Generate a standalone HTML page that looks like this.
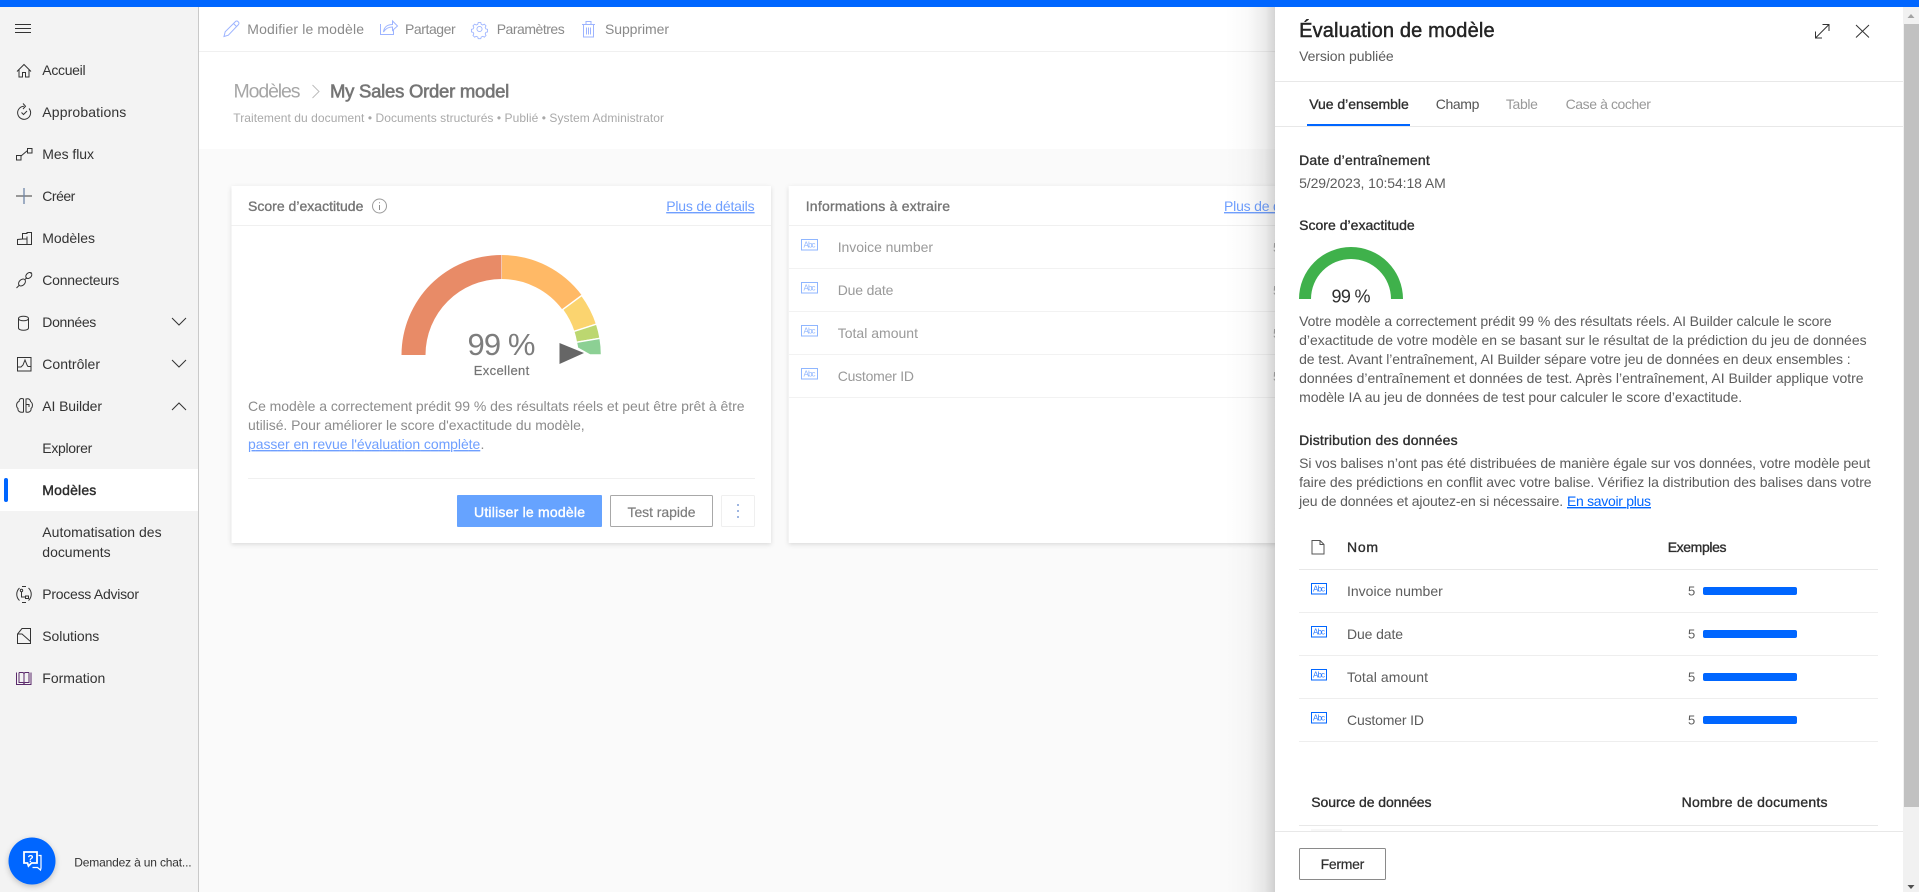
<!DOCTYPE html>
<html lang="fr">
<head>
<meta charset="utf-8">
<title>Évaluation de modèle</title>
<style>
html,body{margin:0;padding:0;width:1919px;height:892px;overflow:hidden;background:#fff}
svg{display:block;position:absolute;left:0;top:0}
text{font-family:"Liberation Sans",Arial,sans-serif;font-size:14px;white-space:pre}
.nav{fill:#333}
.navb{fill:#2b2b2b;stroke:#2b2b2b;stroke-width:.4}
.ic{fill:none;stroke:#333;stroke-width:1}
.tb{fill:#8a8a8a}
.tic{fill:none;stroke:#9db4ff;stroke-width:1}
.c{fill:#8c8c8c}
.cs{fill:#757575;stroke:#757575;stroke-width:.35}
.r{fill:#9a9a9a}
.lk{fill:#6f9fff;text-decoration:underline}
.h{fill:#2e2e2e;stroke:#2e2e2e;stroke-width:.35}
.p{fill:#5c5c5c}
.abc{fill:#fff;stroke:#0066ff;stroke-width:1}
.abct{font-size:8px;fill:#2a7bff}
.abf{fill:#fff;stroke:#8fb6ff;stroke-width:1}
.abft{font-size:8px;fill:#8fb6ff}
.d{stroke:#eeeeee;stroke-width:1}
</style>
</head>
<body>
<svg width="1919" height="892" viewBox="0 0 1919 892" xmlns="http://www.w3.org/2000/svg">
<defs>
<filter id="cs" x="-5%" y="-5%" width="110%" height="112%"><feDropShadow dx="0" dy="1.5" stdDeviation="2.5" flood-color="#000" flood-opacity=".13"/></filter>
<filter id="chs" x="-30%" y="-30%" width="160%" height="160%"><feDropShadow dx="0" dy="2" stdDeviation="3" flood-color="#000" flood-opacity=".22"/></filter>
<linearGradient id="ps" x1="0" x2="1" y1="0" y2="0">
<stop offset="0" stop-color="#000" stop-opacity="0"/>
<stop offset=".45" stop-color="#000" stop-opacity=".02"/>
<stop offset=".8" stop-color="#000" stop-opacity=".08"/>
<stop offset="1" stop-color="#000" stop-opacity=".17"/>
</linearGradient>
</defs>

<!-- main background -->
<rect x="199" y="7" width="1080" height="885" fill="#fff"/>
<rect x="199" y="149" width="1080" height="743" fill="#fafafa"/>
<line x1="199" x2="1279" y1="51.5" y2="51.5" stroke="#f0f0f0"/>

<!-- toolbar -->
<g class="tic">
<path d="M224 36.5l1.2-4.7L235.4 21.6a1.8 1.8 0 0 1 2.6 0l.4.4a1.8 1.8 0 0 1 0 2.6L228.3 35.2z M233.5 23.5l3 3"/>
<path d="M381 26v10.5h13V32 M384 34c.5-5 4-7.5 9-7.5V23l5 5-5 4.500v-3.500c-4 0-7 1.500-9 5z" transform="translate(-.5 -2)"/>
<g transform="translate(479.5 29) scale(.86) translate(-479.5 -29)">
<circle cx="479.500" cy="29" r="3"/>
<path d="M478 21.500h3l.5 2 1.800.8 1.800-1 2 2-1 1.800.8 1.800 2 .5v3l-2 .5-.8 1.800 1 1.800-2 2-1.800-1-1.800.8-.5 2h-3l-.5-2-1.800-.8-1.800 1-2-2 1-1.800-.8-1.800-2-.5v-3l2-.5.8-1.800-1-1.800 2-2 1.800 1 1.800-.8z"/>
</g>
<path d="M582 24.500h13 M586 24.500v-3h5v3 M583.500 24.500v12.500h10v-12.500 M586.500 27.500v7 M588.500 27.500v7 M590.500 27.500v7"/>
</g>
<text class="tb" x="247.300" y="34" textLength="116.700">Modifier le modèle</text>
<text class="tb" x="405" y="34" textLength="50.700">Partager</text>
<text class="tb" x="496.700" y="34" textLength="68">Paramètres</text>
<text class="tb" x="605" y="34" textLength="64">Supprimer</text>

<!-- breadcrumb -->
<text x="233.500" y="97.500" textLength="67" style="font-size:19.500px" fill="#a6a6a6">Modèles</text>
<path d="M312.500 85l6.500 6.500-6.500 6.500" fill="none" stroke="#bdbdbd"/>
<text x="330" y="97.500" textLength="179.300" style="font-size:18.500px;stroke:#757575;stroke-width:.6" fill="#757575">My Sales Order model</text>
<text x="233.300" y="122" textLength="430.700" style="font-size:12px" fill="#a9a9a9">Traitement du document • Documents structurés • Publié • System Administrator</text>

<!-- card 1 -->
<rect x="231.500" y="186" width="539.500" height="357" fill="#fff" filter="url(#cs)"/>
<line x1="231.500" x2="771" y1="225.500" y2="225.500" stroke="#f0f0f0"/>
<text class="cs" x="248" y="211" textLength="115.400">Score d’exactitude</text>
<circle cx="379.500" cy="206" r="7" fill="none" stroke="#9a9a9a"/>
<path d="M379.500 205v5M379.500 202.200v1" stroke="#8c8c8c" fill="none"/>
<text class="lk" x="666.200" y="211" textLength="88.400">Plus de détails</text>

<g stroke="#fff" stroke-width="1.400">
<path fill="#e88b67" d="M401.500 355A100 100 0 0 1 501.500 255V279A76 76 0 0 0 425.500 355Z" stroke="none"/>
<path fill="#ffb966" d="M502 255A100 100 0 0 1 581.800 295.400L562.500 309.700A76 76 0 0 0 502 279Z" stroke="none"/>
<path fill="#fbd46f" d="M581.800 295.400A100 100 0 0 1 596.600 324.100L573.800 331.500A76 76 0 0 0 562.500 309.700Z"/>
<path fill="#bcd770" d="M596.600 324.100A100 100 0 0 1 600.100 338.300L576.400 342.300A76 76 0 0 0 573.800 331.500Z"/>
<path fill="#8cd094" d="M600.100 338.300A100 100 0 0 1 601.500 355H590L577.500 348A76 76 0 0 0 576.400 342.300Z"/>
</g>
<path d="M559.500 343V364L584 353Z" fill="#666"/>
<text x="501.500" y="355" text-anchor="middle" textLength="68" style="font-size:31px" fill="#7d7d7d">99 %</text>
<text class="cs" x="501.500" y="375" text-anchor="middle" textLength="55.500" style="font-size:13px;stroke-width:.2">Excellent</text>

<text class="c" x="248" y="411" textLength="496.500">Ce modèle a correctement prédit 99 % des résultats réels et peut être prêt à être</text>
<text class="c" x="248" y="430" textLength="336.700">utilisé. Pour améliorer le score d'exactitude du modèle,</text>
<text class="lk" x="248" y="449" textLength="232.300">passer en revue l'évaluation complète</text>
<text class="c" x="480.500" y="449">.</text>
<line x1="248" x2="755" y1="478.500" y2="478.500" stroke="#f0f0f0"/>

<rect x="457" y="495" width="145" height="32" rx="1" fill="#66a3ff"/>
<text x="529.500" y="517" text-anchor="middle" textLength="111" fill="#fff" style="stroke:#fff;stroke-width:.4">Utiliser le modèle</text>
<rect x="610.500" y="495.500" width="102" height="31" rx="1" fill="#fff" stroke="#a8a8a8"/>
<text x="661.500" y="517" text-anchor="middle" textLength="68" fill="#7d7d7d" style="stroke:#7d7d7d;stroke-width:.2">Test rapide</text>
<rect x="721.500" y="495.500" width="33" height="31" rx="1" fill="#fff" stroke="#efefef"/>
<circle cx="738" cy="505" r="1" fill="#7f9fd8"/><circle cx="738" cy="511" r="1" fill="#7f9fd8"/><circle cx="738" cy="517" r="1" fill="#7f9fd8"/>

<!-- card 2 -->
<rect x="788.700" y="186" width="520" height="357" fill="#fff" filter="url(#cs)"/>
<line x1="789" x2="1279" y1="225.500" y2="225.500" stroke="#f0f0f0"/>
<text class="cs" x="805.700" y="211" textLength="144.300">Informations à extraire</text>
<text class="lk" x="1224" y="211" textLength="88.400">Plus de détails</text>
<g stroke="#f2f2f2"><line x1="789" x2="1279" y1="268.500" y2="268.500"/><line x1="789" x2="1279" y1="311.500" y2="311.500"/><line x1="789" x2="1279" y1="354.500" y2="354.500"/><line x1="789" x2="1279" y1="397.500" y2="397.500"/></g>
<rect class="abf" x="801.500" y="239.500" width="16" height="10.500"/><text class="abft" x="803.500" y="247.500" textLength="12">Abc</text>
<rect class="abf" x="801.500" y="282.500" width="16" height="10.500"/><text class="abft" x="803.500" y="290.500" textLength="12">Abc</text>
<rect class="abf" x="801.500" y="325.500" width="16" height="10.500"/><text class="abft" x="803.500" y="333.500" textLength="12">Abc</text>
<rect class="abf" x="801.500" y="368.500" width="16" height="10.500"/><text class="abft" x="803.500" y="376.500" textLength="12">Abc</text>
<text class="r" x="837.700" y="252" textLength="95.300">Invoice number</text>
<text class="r" x="837.700" y="295" textLength="55.700">Due date</text>
<text class="r" x="837.700" y="338" textLength="80.300">Total amount</text>
<text class="r" x="837.700" y="381" textLength="76.300">Customer ID</text>
<text x="1273" y="252" style="font-size:13px" fill="#b0b0b0">5</text>
<text x="1273" y="295" style="font-size:13px" fill="#b0b0b0">5</text>
<text x="1273" y="338" style="font-size:13px" fill="#b0b0b0">5</text>
<text x="1273" y="381" style="font-size:13px" fill="#b0b0b0">5</text>

<!-- sidebar -->
<rect x="0" y="7" width="198" height="885" fill="#f3f3f3"/>
<rect x="198" y="7" width="1" height="885" fill="#c9c9c9"/>
<rect x="0" y="469" width="198" height="42" fill="#fff"/>
<rect x="4" y="478" width="4" height="24" rx="2" fill="#0066ff"/>
<path d="M15 24.500h16M15 28.500h16M15 32.500h16" stroke="#333" fill="none"/>

<g class="ic">
<path d="M17 71.500L24 64.500L31 71.500M19 69.500V77H22.500V72.500H25.500V77H29V69.500"/>
<path d="M29 108.500a6.500 6.500 0 1 1-5-2.200M23 103.500l2.500 2.700L23 109 M21.500 112.500l2 2 3.500-3.500"/>
<path d="M16.500 155.500h4.500v4.500h-4.500zM27.500 148.500h4.500v4.500h-4.500zM21 156L27.500 150.500"/>
<path d="M16 196h16" stroke="#666" stroke-width="1.300"/><path d="M24 188v16" stroke="#6f86a8" stroke-width="1.300"/>
<path d="M17.500 244.500v-5l5-.5v-5.500h4.500v-1h4.500v12h-14zM22.500 239h4.500v-2.500M27 239v5.500"/>
<path d="M16.500 288l3-3M25 279.500l2-2M31.500 272.500l-1 1"/>
<ellipse cx="22" cy="282.500" rx="4" ry="2.800" transform="rotate(-45 22 282.500)"/>
<ellipse cx="28.800" cy="275.500" rx="3.500" ry="2.500" transform="rotate(-45 28.800 275.500)"/>
<path d="M18.500 318.500c0-3 10-3 10 0v9.500c0 3-10 3-10 0zM18.500 318.500c0 3 10 3 10 0"/>
<rect x="17.500" y="357.500" width="13.500" height="13.500"/>
<path d="M18 367h3l2-2 2-5 2 5 1 1.500h3"/>
<path d="M23.500 399c-3-1.500-4.500 .5-4.500 2.500-3 1-3 5.500-1 7-.5 2.500 2 4.500 5.500 3.500zM23.500 399v13M26 399c3-1 4.500 1 4.500 2.500 2.500 1.500 2.500 5.500 .5 7 .5 2.500-2 4.500-5 3.500zM26 404.500h3v2.500"/>
<path d="M19.500 588a8.500 8.500 0 0 0 0 12.500M28.500 588a8.500 8.500 0 0 1 0 12.500M22 586.500h4M22 602.500h4"/>
<circle cx="21.500" cy="590.500" r="1.200"/><rect x="25.500" y="596" width="3" height="2.500"/><path d="M21.500 592v5h4"/>
<path d="M17.500 634V643.500H30.500V628.500H22L17.500 634ZM17.500 634h4.500l8.500 7.500"/>
<g stroke="#5b2a6b">
<path d="M16.500 672.500V684.500H31V672.500M19 672.500H22.500C23.500 672.500 24 673.500 24 674.500V684.500M29 672.500H25.500C24.500 672.500 24 673.500 24 674.500M19 672.500V682.500H22.500C23.500 682.500 24 683 24 684M29 672.500V682.500H25.500C24.500 682.500 24 683 24 684"/>
</g>
</g>

<text class="nav" x="42.300" y="75" textLength="43.300">Accueil</text>
<text class="nav" x="42.300" y="117" textLength="84">Approbations</text>
<text class="nav" x="42.300" y="159" textLength="51.700">Mes flux</text>
<text class="nav" x="42.300" y="201" textLength="33">Créer</text>
<text class="nav" x="42.300" y="243" textLength="52.700">Modèles</text>
<text class="nav" x="42.300" y="285" textLength="77">Connecteurs</text>
<text class="nav" x="42.300" y="327" textLength="54">Données</text>
<text class="nav" x="42.300" y="369" textLength="57.700">Contrôler</text>
<text class="nav" x="42.300" y="411" textLength="59.700">AI Builder</text>
<text class="nav" x="42.300" y="453" textLength="50">Explorer</text>
<text class="navb" x="42.300" y="495" textLength="54">Modèles</text>
<text class="nav" x="42.300" y="537" textLength="119.300">Automatisation des</text>
<text class="nav" x="42.300" y="557" textLength="68.300">documents</text>
<text class="nav" x="42.300" y="599" textLength="96.700">Process Advisor</text>
<text class="nav" x="42.300" y="641" textLength="57">Solutions</text>
<text class="nav" x="42.300" y="683" textLength="63">Formation</text>

<g fill="none" stroke="#333"><path d="M172 318l7 7 7-7M172 360l7 7 7-7M172 410l7-7 7 7"/></g>

<circle cx="32" cy="861" r="23.500" fill="#0066ff" filter="url(#chs)"/>
<path d="M24 852h13v11h-5.500l-3 3-1-3H24z" fill="none" stroke="#fff" stroke-width="1.800"/>
<path d="M38.500 855.500h2.500v12.500l-.5 2-3-2.500h-5" fill="none" stroke="#fff" stroke-width="1.200"/>
<text x="30.500" y="862" text-anchor="middle" style="font-size:10px;font-weight:bold" fill="#fff">?</text>
<text x="74.300" y="866.500" textLength="117.300" style="font-size:12px" fill="#333">Demandez à un chat...</text>

<!-- panel shadow + panel -->
<rect x="1225" y="7" width="50" height="885" fill="url(#ps)"/>
<rect x="1275" y="7" width="644" height="885" fill="#fff"/>

<text x="1299.100" y="37" textLength="195.500" style="font-size:20px;stroke:#242424;stroke-width:.45" fill="#242424">Évaluation de modèle</text>
<text class="p" x="1299.100" y="61" textLength="94.600">Version publiée</text>
<path d="M1815.500 38L1829 24.500M1822.500 24.500H1829V31M1815.500 31.500V38H1822" fill="none" stroke="#333"/>
<path d="M1856 25L1869 37.500M1869 25L1856 37.500" fill="none" stroke="#333"/>
<line x1="1275" x2="1903" y1="81.500" y2="81.500" stroke="#e8e8e8"/>

<text class="h" x="1309.200" y="109" textLength="99.600">Vue d’ensemble</text>
<text x="1435.700" y="109" textLength="43.700" fill="#555">Champ</text>
<text x="1505.900" y="109" textLength="32" fill="#999">Table</text>
<text x="1565.600" y="109" textLength="85.300" fill="#999">Case à cocher</text>
<rect x="1307" y="124" width="103" height="2" fill="#0066ff"/>
<line x1="1275" x2="1903" y1="126.500" y2="126.500" stroke="#e8e8e8"/>

<text class="h" x="1299.100" y="165" textLength="130.700">Date d’entraînement</text>
<text class="p" x="1299.100" y="188" textLength="146.700">5/29/2023, 10:54:18 AM</text>
<text class="h" x="1299.100" y="230" textLength="115.600">Score d’exactitude</text>

<path d="M1299 299A52 52 0 0 1 1403 299H1391A40 40 0 0 0 1311 299Z" fill="#3fb14b"/>
<text x="1351" y="302.700" text-anchor="middle" textLength="39" style="font-size:18px" fill="#2e2e2e">99 %</text>

<text class="p" x="1299.100" y="326" textLength="532.600">Votre modèle a correctement prédit 99 % des résultats réels. AI Builder calcule le score</text>
<text class="p" x="1299.100" y="345" textLength="567.500">d’exactitude de votre modèle en se basant sur le résultat de la prédiction du jeu de données</text>
<text class="p" x="1299.100" y="364" textLength="551.500">de test. Avant l’entraînement, AI Builder sépare votre jeu de données en deux ensembles :</text>
<text class="p" x="1299.100" y="383" textLength="564.500">données d’entraînement et données de test. Après l’entraînement, AI Builder applique votre</text>
<text class="p" x="1299.100" y="402" textLength="443">modèle IA au jeu de données de test pour calculer le score d’exactitude.</text>

<text class="h" x="1299.100" y="445" textLength="158.500">Distribution des données</text>
<text class="p" x="1299.100" y="468" textLength="571.200">Si vos balises n’ont pas été distribuées de manière égale sur vos données, votre modèle peut</text>
<text class="p" x="1299.100" y="487" textLength="572.500">faire des prédictions en conflit avec votre balise. Vérifiez la distribution des balises dans votre</text>
<text class="p" x="1299.100" y="506" textLength="264">jeu de données et ajoutez-en si nécessaire.</text>
<text x="1567" y="506" textLength="84" fill="#0066ff" style="text-decoration:underline">En savoir plus</text>

<path d="M1312 540.500h8l4 4v9.500h-12zM1320 540.500v4h4" fill="none" stroke="#555"/>
<text class="h" x="1347" y="552" textLength="31">Nom</text>
<text class="h" x="1667.700" y="552" textLength="58.800">Exemples</text>
<line x1="1299" x2="1878" y1="569.500" y2="569.500" stroke="#e8e8e8"/>
<line x1="1299" x2="1878" y1="612.500" y2="612.500" stroke="#eee"/>
<line x1="1299" x2="1878" y1="655.500" y2="655.500" stroke="#eee"/>
<line x1="1299" x2="1878" y1="698.500" y2="698.500" stroke="#eee"/>
<line x1="1299" x2="1878" y1="741.500" y2="741.500" stroke="#eee"/>

<rect class="abc" x="1311.500" y="583.500" width="15" height="10.500"/><text class="abct" x="1313" y="591.500" textLength="12">Abc</text>
<rect class="abc" x="1311.500" y="626.500" width="15" height="10.500"/><text class="abct" x="1313" y="634.500" textLength="12">Abc</text>
<rect class="abc" x="1311.500" y="669.500" width="15" height="10.500"/><text class="abct" x="1313" y="677.500" textLength="12">Abc</text>
<rect class="abc" x="1311.500" y="712.500" width="15" height="10.500"/><text class="abct" x="1313" y="720.500" textLength="12">Abc</text>

<text class="p" x="1347" y="596" textLength="95.800">Invoice number</text>
<text class="p" x="1347" y="639" textLength="56">Due date</text>
<text class="p" x="1347" y="682" textLength="81">Total amount</text>
<text class="p" x="1347" y="725" textLength="77">Customer ID</text>

<text class="p" x="1688" y="595.500" style="font-size:13px">5</text>
<text class="p" x="1688" y="638.500" style="font-size:13px">5</text>
<text class="p" x="1688" y="681.500" style="font-size:13px">5</text>
<text class="p" x="1688" y="724.500" style="font-size:13px">5</text>
<rect x="1703" y="587" width="94" height="8" rx="2" fill="#0066ff"/>
<rect x="1703" y="630" width="94" height="8" rx="2" fill="#0066ff"/>
<rect x="1703" y="673" width="94" height="8" rx="2" fill="#0066ff"/>
<rect x="1703" y="716" width="94" height="8" rx="2" fill="#0066ff"/>

<text class="h" x="1311.300" y="807" textLength="120.200">Source de données</text>
<text class="h" x="1681.600" y="807" textLength="145.900">Nombre de documents</text>
<line x1="1299" x2="1878" y1="825.500" y2="825.500" stroke="#e8e8e8"/>
<rect x="1311" y="829" width="31" height="2" fill="#f7f7f7"/>
<line x1="1275" x2="1903" y1="831.500" y2="831.500" stroke="#e8e8e8"/>
<rect x="1299.500" y="848.500" width="86" height="31" rx="1" fill="#fff" stroke="#8a8a8a"/>
<text x="1342.500" y="869" text-anchor="middle" textLength="43.700" fill="#2e2e2e" style="stroke:#2e2e2e;stroke-width:.2">Fermer</text>

<!-- scrollbar -->
<rect x="1903" y="7" width="16" height="885" fill="#f1f1f1"/>
<rect x="1904" y="24" width="15" height="783" fill="#c1c1c1"/>
<path d="M1907.500 18L1911 14L1914.500 18Z" fill="#a3a3a3"/>
<path d="M1907.500 885L1911 889L1914.500 885Z" fill="#505050"/>

<!-- top bar -->
<rect x="0" y="0" width="1919" height="7" fill="#0066ff"/>
</svg>
</body>
</html>
